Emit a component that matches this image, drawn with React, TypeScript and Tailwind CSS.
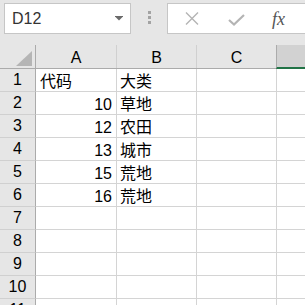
import React from 'react';

const rows: [string, string][] = [
  ['代码', '大类'],
  ['10', '草地'],
  ['12', '农田'],
  ['13', '城市'],
  ['15', '荒地'],
  ['16', '荒地'],
  ['', ''],
  ['', ''],
  ['', ''],
  ['', ''],
  ['', ''],
];

const font = { fontFamily: '"Liberation Sans", "Noto Sans CJK SC", sans-serif' };

export default function App() {
  return (
    <div className="w-[305px] h-[305px] overflow-hidden bg-[#e6e6e6] text-black" style={font}>
      {/* Formula bar */}
      <div className="h-[45px] flex items-start pt-[3px]">
        <div className="ml-[4px] w-[127px] h-[31px] bg-white border border-[#c6c6c6] flex items-center pl-[7px] pr-[7px]">
          <span className="text-[16px] text-[#333] leading-none">D12</span>
          <svg className="ml-auto" width="8" height="5" viewBox="0 0 8 5">
            <rect x="0" y="0" width="8" height="1" fill="#6a6a6a" />
            <polygon points="0.5,1 7.5,1 4,4.5" fill="#6a6a6a" />
          </svg>
        </div>
        <div className="ml-[17px] mt-[8px] flex flex-col gap-[2px]">
          <div className="w-[3px] h-[3px] bg-[#a3a3a3]" />
          <div className="w-[3px] h-[3px] bg-[#a3a3a3]" />
          <div className="w-[3px] h-[3px] bg-[#a3a3a3]" />
        </div>
        <div className="ml-[16px] flex-1 h-[31px] bg-white border border-[#c6c6c6] border-r-0 flex items-center">
          <svg className="ml-[17px]" width="14" height="13" viewBox="0 0 14 13">
            <path d="M1 0.5 L13 12.5 M13 0.5 L1 12.5" stroke="#b4b4b4" strokeWidth="1.4" fill="none" />
          </svg>
          <svg className="ml-[29px] mt-[3px]" width="17" height="12" viewBox="0 0 17 12">
            <path d="M1 6 L6 10.5 L16 1" stroke="#b4b4b4" strokeWidth="2.2" fill="none" />
          </svg>
          <span
            className="ml-[27px] text-[18px] italic text-[#555] leading-none"
            style={{ fontFamily: '"Liberation Serif", serif' }}
          >
            fx
          </span>
        </div>
      </div>

      {/* Column headers */}
      <div className="flex h-[24px] border-b border-[#ababab]">
        <div className="w-[36px] border-r border-[#ababab] flex items-end justify-end pr-[3px] pb-[2px]">
          <svg width="16" height="15" viewBox="0 0 16 15">
            <polygon points="0,15 16,15 16,0" fill="#b5b5b5" />
          </svg>
        </div>
        {['A', 'B', 'C'].map((c, i) => (
          <div
            key={c}
            className={`${i === 0 ? 'w-[81px]' : 'w-[80px]'} border-r border-[#d0d0d0] flex items-end justify-center pb-[2px] text-[16px] leading-[16px]`}
          >
            {c}
          </div>
        ))}
        <div className="flex-1 bg-[#d2d2d2] border-b-2 border-[#217346] -mb-[1px] border-l border-l-[#ababab] -ml-[1px]" />
      </div>

      {/* Rows */}
      {rows.map((r, i) => (
        <div key={i} className="flex h-[23px]">
          <div className="w-[36px] border-r border-r-[#ababab] border-b border-b-[#d0d0d0] flex items-center justify-center text-[16px] leading-none">
            {i + 1}
          </div>
          <div
            className={`w-[81px] bg-white border-r border-b border-[#d4d4d4] flex items-end text-[16px] leading-[16px] pb-[1px] ${
              i === 0 ? 'justify-start pl-[4px]' : 'justify-end pr-[4px]'
            }`}
          >
            {r[0]}
          </div>
          <div className="w-[80px] bg-white border-r border-b border-[#d4d4d4] flex items-end pl-[3px] pb-[1px] text-[16px] leading-[16px]">
            {r[1]}
          </div>
          <div className="w-[80px] bg-white border-r border-b border-[#d4d4d4]" />
          <div className="flex-1 bg-white border-b border-[#d4d4d4]" />
        </div>
      ))}
    </div>
  );
}
